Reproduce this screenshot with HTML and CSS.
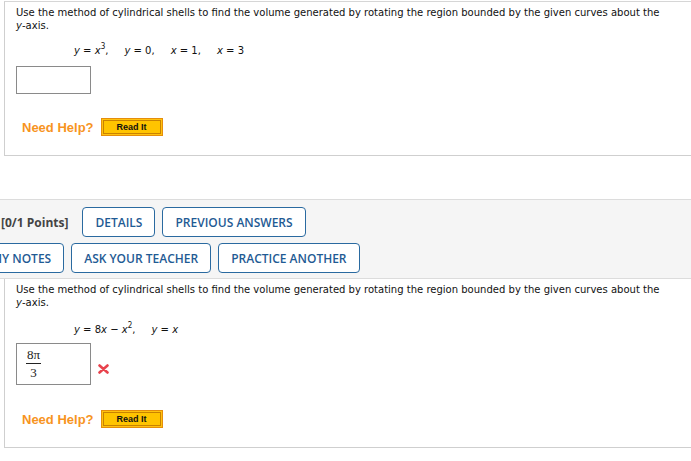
FILE: index.html
```html
<!DOCTYPE html>
<html>
<head>
<meta charset="utf-8">
<link rel="stylesheet" href="styles.css">
</head>
<body>
<div class="card card-top">
  <p class="prompt">Use the method of cylindrical shells to find the volume generated by rotating the region bounded by the given curves about the <span class="nw"><i>y</i>-axis.</span></p>
  <p class="eq"><i>y</i> = <i>x</i><sup>3</sup>,<span class="sp"></span><i>y</i> = 0,<span class="sp"></span><i>x</i> = 1,<span class="sp"></span><i>x</i> = 3</p>
  <div class="answer-row"><div class="answer"></div></div>
  <div class="help">
    <span class="need">Need Help?</span>
    <span class="readit"><span class="readit-in">Read It</span></span>
  </div>
</div>

<div class="band">
  <div class="band-row">
    <span class="points">[0/1 Points]</span>
    <span class="btn">DETAILS</span>
    <span class="btn">PREVIOUS ANSWERS</span>
  </div>
  <div class="band-row row2">
    <span class="btn btn-notes">MY NOTES</span>
    <span class="btn">ASK YOUR TEACHER</span>
    <span class="btn">PRACTICE ANOTHER</span>
  </div>
</div>

<div class="card card-bottom">
  <p class="prompt">Use the method of cylindrical shells to find the volume generated by rotating the region bounded by the given curves about the <span class="nw"><i>y</i>-axis.</span></p>
  <p class="eq"><i>y</i> = 8<i>x</i> &minus; <i>x</i><sup>2</sup>,<span class="sp"></span><i>y</i> = <i>x</i></p>
  <div class="answer-row">
    <div class="answer answer-filled">
      <span class="frac"><span class="num">8&pi;</span><span class="den">3</span></span>
    </div>
    <svg class="wrong" width="11" height="10" viewBox="0 0 11 10"><path d="M1.5 1.5 L9.5 8.5 M9.5 1.5 L1.5 8.5" stroke="#e8434d" stroke-width="2.6" stroke-linecap="round"/></svg>
  </div>
  <div class="help">
    <span class="need">Need Help?</span>
    <span class="readit"><span class="readit-in">Read It</span></span>
  </div>
</div>
</body>
</html>
```

FILE: styles.css
```css
html, body {
  margin: 0;
  padding: 0;
  background: #fff;
  overflow: hidden;
}
body {
  width: 691px;
  height: 461px;
  font-family: "DejaVu Sans Condensed", "DejaVu Sans", sans-serif;
}
.card {
  margin-left: 4px;
  border-left: 1px solid #cfcfcf;
  padding-left: 11px;
}
.card-top {
  margin-top: 1px;
  border-top: 1px solid #d6d6d6;
  border-bottom: 1px solid #cfcfcf;
  padding-top: 4px;
  height: 149px;
}
.card-bottom {
  border-bottom: 1px solid #cfcfcf;
  padding-top: 4px;
  height: 164px;
}
.prompt {
  margin: 0;
  font-size: 11.15px;
  line-height: 13px;
  color: #111;
  width: 670px;
}
.nw { white-space: nowrap; }
.eq {
  margin: 12px 0 0 58px;
  font-size: 11.15px;
  line-height: 14px;
  color: #111;
}
.card-bottom .eq { margin-top: 14px; }
.eq sup {
  font-size: 8px;
  line-height: 0;
  vertical-align: 5px;
}
.sp {
  display: inline-block;
  width: 16px;
}
.answer-row {
  display: flex;
  align-items: center;
  margin-top: 8px;
}
.answer {
  width: 73px;
  height: 26px;
  border: 1px solid #8a8a8a;
}
.answer-filled {
  height: 40px;
  display: flex;
  align-items: center;
  padding-left: 9px;
  width: 64px;
  box-sizing: content-box;
}
.card-bottom .answer-row { margin-top: 6px; }
.frac {
  display: inline-flex;
  flex-direction: column;
  align-items: center;
  font-family: "Liberation Serif", "DejaVu Serif", serif;
  font-size: 13px;
  line-height: 14px;
  color: #222;
}
.num {
  border-bottom: 1px solid #222;
  padding: 0 1px 1px;
}
.den { padding-top: 2px; }
.wrong {
  margin-left: 7px;
  margin-top: 10px;
}
.help {
  display: flex;
  align-items: center;
  margin-top: 24px;
  padding-left: 6px;
}
.card-bottom .help { margin-top: 25px; }
.need {
  font-family: "Liberation Sans", Arial, sans-serif;
  font-weight: bold;
  font-size: 13px;
  color: #f7941e;
  margin-right: 7px;
}
.readit {
  display: inline-block;
  border: 1px solid #e58e0b;
  background: #ffc20e;
  padding: 1px;
}
.readit-in {
  display: block;
  width: 56px;
  height: 12px;
  border: 1px solid #c98200;
  background: #ffc400;
  font-family: "Liberation Sans", Arial, sans-serif;
  font-weight: bold;
  font-size: 9px;
  line-height: 12px;
  text-align: center;
  color: #111;
}
.band {
  margin-top: 43px;
  background: #f5f5f5;
  border-top: 1px solid #dcdcdc;
  border-bottom: 1px solid #dcdcdc;
  padding: 7px 0 5px 1px;
}
.band-row {
  display: flex;
  align-items: center;
  gap: 7px;
}
.row2 {
  margin-top: 6px;
  margin-left: -23px;
}
.btn-notes { padding-right: 11px; }
.points {
  font-family: "Open Sans", sans-serif;
  font-weight: bold;
  font-size: 12px;
  color: #444;
  margin-right: 7px;
}
.btn {
  display: inline-flex;
  align-items: center;
  height: 28px;
  padding: 0 12px;
  border: 1px solid #2a6aa0;
  border-radius: 4px;
  background: #fff;
  font-family: "Open Sans", sans-serif;
  font-weight: 600;
  font-size: 12px;
  color: #1f5b94;
}
```
